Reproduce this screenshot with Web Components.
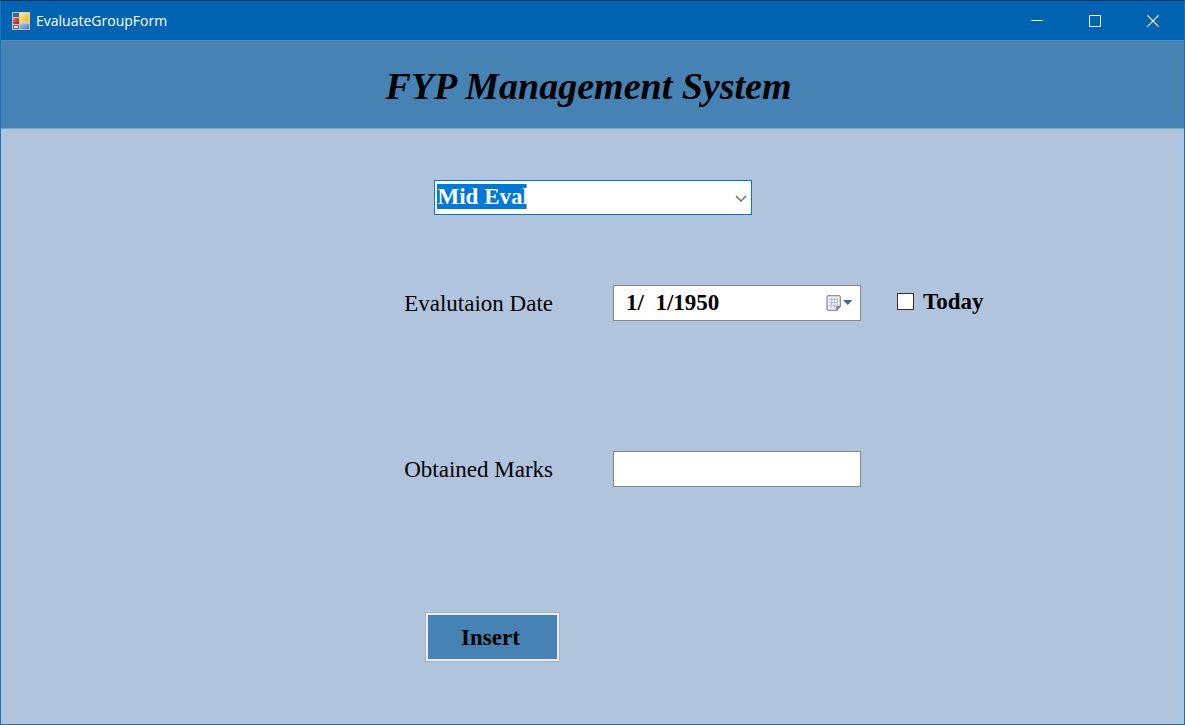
<!DOCTYPE html>
<html lang="en">
<head>
<meta charset="utf-8">
<meta name="viewport" content="width=device-width, initial-scale=1">
<title>EvaluateGroupForm</title>
<style>
  body { margin: 0; font-family: "Liberation Serif", "Times New Roman", serif; font-size: 23px; line-height: 27px; color: #000; }
</style>
</head>
<body>
<app-window>
  <title-bar slot="bar">EvaluateGroupForm</title-bar>
  <page-banner slot="banner">FYP Management System</page-banner>
  <evaluation-form></evaluation-form>
</app-window>

<script>
const define = (name, html) => {
  const template = document.createElement('template');
  template.innerHTML = html;
  customElements.define(name, class extends HTMLElement {
    constructor() {
      super();
      this.attachShadow({ mode: 'open' }).append(template.content.cloneNode(true));
    }
  });
};

define('app-window', `
  <style>
    :host { display: flex; flex-direction: column; box-sizing: border-box; min-height: 100vh;
      background: #b0c4de; border: 1px solid #1a74bd; border-top-color: #06355f; }
    main { flex: 1; }
  </style>
  <slot name="bar"></slot>
  <slot name="banner"></slot>
  <main><slot></slot></main>
`);

define('title-bar', `
  <style>
    :host { display: flex; align-items: center; height: 39px; padding-right: 2px; background: #0063b1; color: #fff;
      font-family: "Open Sans", "Noto Sans", sans-serif; font-size: 14px; line-height: 20px; }
    .icon { margin: 0 6px 0 11px; flex: none; }
    .caption { flex: 1; }
    button { width: 58px; height: 100%; padding: 0; border: 0; background: none; color: inherit; display: grid; place-items: center; }
    button:hover { background: #1a73b9; }
    svg { display: block; }
  </style>
  <svg class="icon" width="18" height="18" viewBox="0 0 18 18" aria-hidden="true">
    <defs>
      <linearGradient id="y" x1="0" y1="0" x2="1" y2="1"><stop offset="0" stop-color="#fff3a0"/><stop offset="1" stop-color="#e9a900"/></linearGradient>
      <linearGradient id="r" x1="0" y1="0" x2="1" y2="1"><stop offset="0" stop-color="#e87a68"/><stop offset="1" stop-color="#a51a16"/></linearGradient>
      <linearGradient id="b" x1="0" y1="0" x2="1" y2="1"><stop offset="0" stop-color="#a9c8ff"/><stop offset="1" stop-color="#3f75d4"/></linearGradient>
    </defs>
    <rect width="18" height="18" fill="#c9c4b5"/>
    <rect x="1" y="1" width="6" height="4" fill="#39699c"/>
    <rect x="8" y="1" width="9" height="9" fill="url(#y)" stroke="#f5dda0" stroke-width="1"/>
    <rect x="1" y="6" width="6" height="6" fill="url(#r)"/>
    <rect x="1" y="13" width="6" height="4" fill="#5f6f8c"/>
    <rect x="2" y="14" width="4" height="2" fill="#d9d9d9"/>
    <rect x="8" y="12" width="9" height="5" fill="url(#b)"/>
  </svg>
  <span class="caption"><slot></slot></span>
  <button type="button" aria-label="Minimize"><svg width="12" height="12" viewBox="0 0 12 12"><path d="M0 5.5h12" stroke="#fff"/></svg></button>
  <button type="button" aria-label="Maximize"><svg width="12" height="12" viewBox="0 0 12 12"><path d="M.5.5h11v11H.5z" fill="none" stroke="#fff"/></svg></button>
  <button type="button" aria-label="Close"><svg width="12" height="12" viewBox="0 0 12 12"><path d="M.4.4l11.2 11.2M11.6.4L.4 11.6" stroke="#fff" stroke-width="1.2"/></svg></button>
`);

define('page-banner', `
  <style>
    :host { display: block; background: #4682b4; border-top: 1px solid #4f8fc4; border-bottom: 1px solid #7b9fc6; }
    h1 { margin: 0; padding: 24px 8px 20px 0; text-align: center; font-size: 38px; line-height: 43px; font-weight: bold; font-style: italic; }
  </style>
  <h1><slot></slot></h1>
`);

define('combo-box', `
  <style>
    :host { display: grid; position: relative; width: 318px; }
    select { appearance: none; box-sizing: border-box; height: 35px; margin: 0; padding: 0 28px 2px 3px;
      border: 1px solid #0078d7; border-radius: 0; outline: 0; font: inherit; font-weight: bold; color: #fff;
      background: linear-gradient(90deg, #0078d7 89px, #ff8728 89px) 2px 3px / 90px 25px no-repeat #fff; }
    option { color: #000; }
    svg { position: absolute; right: 5px; top: 15px; pointer-events: none; }
  </style>
  <select aria-label="Evaluation"><option>Mid Eval</option><option>Final Eval</option></select>
  <svg width="12" height="8" viewBox="0 0 12 8" aria-hidden="true"><path d="M1 1l5 5 5-5" fill="none" stroke="#666" stroke-width="1.4"/></svg>
`);

define('form-row', `
  <style>
    :host { display: grid; grid-template-columns: 1fr 1fr; column-gap: 60px; align-items: center; padding-right: 19px; }
    .label { text-align: right; }
    .control { display: flex; align-items: center; gap: 36px; }
  </style>
  <div class="label"><slot name="label"></slot></div>
  <div class="control"><slot></slot></div>
`);

define('evaluation-form', `
  <style>
    :host { display: block; }
    form { display: flex; flex-direction: column; padding: 51px 0 40px; }
    combo-box { align-self: center; margin-bottom: 70px; }
    .date-row { margin-bottom: 130px; }
    .marks-row { margin-bottom: 125px; }
    .box { box-sizing: border-box; width: 248px; height: 36px; border: 1px solid #838790; background: #fff; }
    input[type="text"] { margin: 0; border-radius: 0; padding: 0 12px; font: inherit; font-weight: bold; color: #000; outline: 0; }
    .date { display: flex; align-items: center; padding-right: 7px; }
    .date input { flex: 1; min-width: 0; height: 34px; border: 0; background: none; }
    .date button { padding: 0; border: 0; background: none; }
    svg { display: block; }
    .check { display: flex; align-items: center; gap: 9px; padding-bottom: 3px; font-weight: bold; }
    .check input { appearance: none; box-sizing: border-box; width: 17px; height: 17px; margin: 0; border: 1px solid #333; background: #fff; }
    .check input:checked { background: #0078d7; }
    .actions { padding-left: calc(50% - 168px); }
    .actions button { box-sizing: border-box; width: 135px; height: 50px; padding: 0 3px 0 0; border: 1px solid #b5b1ad; outline: 0;
      box-shadow: inset 0 0 0 2px #e6edf5; background: #4682b4; font: inherit; font-weight: bold; color: #000; }
  </style>
  <form>
    <combo-box></combo-box>
    <form-row class="date-row">
      <label slot="label" for="date">Evalutaion Date</label>
      <div class="box date">
        <input id="date" type="text" value="1/  1/1950">
        <button type="button" aria-label="Open calendar">
          <svg width="27" height="16" viewBox="0 0 27 16" aria-hidden="true">
            <path d="M2 .7h11.3q1 0 1 1v9.6l-3.6 4H2q-1 0-1-1V1.700q0-1 1-1z" fill="#e9ebef" stroke="#77777d"/>
            <path d="M3 4.500h9M3 7.500h9M3 10.500h8M5.500 3v10M8.500 3v10M11.500 3v8" stroke="#b4bac5" stroke-width=".8"/>
            <path d="M14.300 11.300h-3.600v4z" fill="#8b8b90" stroke="#68686c" stroke-width=".6"/>
            <path d="M17 5h9.500l-4.700 5z" fill="#4a6484"/>
          </svg>
        </button>
      </div>
      <label class="check"><input type="checkbox">Today</label>
    </form-row>
    <form-row class="marks-row">
      <label slot="label" for="marks">Obtained Marks</label>
      <input class="box" id="marks" type="text">
    </form-row>
    <div class="actions"><button type="button">Insert</button></div>
  </form>
`);
</script>
</body>
</html>
